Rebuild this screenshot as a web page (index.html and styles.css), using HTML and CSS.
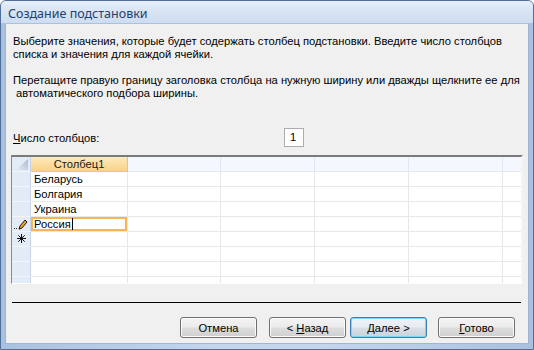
FILE: index.html
```html
<!DOCTYPE html>
<html lang="ru">
<head>
<meta charset="utf-8">
<title>Создание подстановки</title>
<link rel="stylesheet" href="styles.css">
</head>
<body>
<div class="window">
  <div class="titlebar"><span class="title">Создание подстановки</span></div>
  <div class="client">
    <p class="para">Выберите значения, которые будет содержать столбец подстановки. Введите число столбцов<br>списка и значения для каждой ячейки.</p>
    <p class="para p2">Перетащите правую границу заголовка столбца на нужную ширину или дважды щелкните ее для<br>&nbsp;автоматического подбора ширины.</p>
    <div class="cols-row">
      <span class="label"><u>Ч</u>исло столбцов:</span>
      <span class="numbox">1</span>
    </div>
    <div class="grid">
      <div class="row head">
        <div class="cell rh corner"><svg width="18" height="14" viewBox="0 0 18 14"><defs><linearGradient id="tg" x1="0" y1="1" x2="1" y2="0"><stop offset="0" stop-color="#e6ecf5"/><stop offset="1" stop-color="#a9b9cf"/></linearGradient></defs><polygon points="16,2 16,13 4,13" fill="url(#tg)"/></svg></div>
        <div class="cell ch active">Столбец1</div>
        <div class="cell ch"></div><div class="cell ch"></div><div class="cell ch"></div><div class="cell ch"></div><div class="cell ch last"></div>
      </div>
      <div class="row">
        <div class="cell rh"></div><div class="cell txt">Беларусь</div>
        <div class="cell"></div><div class="cell"></div><div class="cell"></div><div class="cell"></div><div class="cell last"></div>
      </div>
      <div class="row">
        <div class="cell rh"></div><div class="cell txt">Болгария</div>
        <div class="cell"></div><div class="cell"></div><div class="cell"></div><div class="cell"></div><div class="cell last"></div>
      </div>
      <div class="row">
        <div class="cell rh"></div><div class="cell txt">Украина</div>
        <div class="cell"></div><div class="cell"></div><div class="cell"></div><div class="cell"></div><div class="cell last"></div>
      </div>
      <div class="row">
        <div class="cell rh sel"><svg width="18" height="14" viewBox="0 0 18 14"><rect x="2" y="11" width="1" height="1" fill="#333"/><rect x="4" y="11" width="1" height="1" fill="#333"/><polygon points="7,12 8,9 13,3 15,5 10,11" fill="#f3a32c" stroke="#1a1a1a" stroke-width="1" stroke-linejoin="round"/><line x1="7" y1="12" x2="8.5" y2="11.5" stroke="#1a1a1a"/></svg></div>
        <div class="cell txt editing">Россия<span class="caret"></span></div>
        <div class="cell"></div><div class="cell"></div><div class="cell"></div><div class="cell"></div><div class="cell last"></div>
      </div>
      <div class="row">
        <div class="cell rh"><svg width="18" height="14" viewBox="0 0 18 14"><g stroke="#111" stroke-width="1"><line x1="9.5" y1="2" x2="9.5" y2="11"/><line x1="5" y1="6.5" x2="14" y2="6.5"/><line x1="6.3" y1="3.3" x2="12.7" y2="9.7"/><line x1="12.7" y1="3.3" x2="6.3" y2="9.7"/></g></svg></div>
        <div class="cell"></div>
        <div class="cell"></div><div class="cell"></div><div class="cell"></div><div class="cell"></div><div class="cell last"></div>
      </div>
      <div class="row">
        <div class="cell rh"></div><div class="cell"></div>
        <div class="cell"></div><div class="cell"></div><div class="cell"></div><div class="cell"></div><div class="cell last"></div>
      </div>
      <div class="row">
        <div class="cell rh"></div><div class="cell"></div>
        <div class="cell"></div><div class="cell"></div><div class="cell"></div><div class="cell"></div><div class="cell last"></div>
      </div>
      <div class="row">
        <div class="cell rh"></div><div class="cell"></div>
        <div class="cell"></div><div class="cell"></div><div class="cell"></div><div class="cell"></div><div class="cell last"></div>
      </div>
    </div>
    <div class="sep"></div>
    <div class="buttons">
      <button class="btn">Отмена</button>
      <div class="nav">
        <button class="btn">&lt; <u>Н</u>азад</button>
        <button class="btn default"><u>Д</u>алее &gt;</button>
      </div>
      <button class="btn"><u>Г</u>отово</button>
    </div>
  </div>
</div>
</body>
</html>
```
FILE: styles.css
```css
* { box-sizing: border-box; }
html, body { margin: 0; padding: 0; }
body {
  width: 534px;
  height: 350px;
  overflow: hidden;
  background: #ffffff;
  font-family: "Liberation Sans", Arial, sans-serif;
  font-size: 11.2px;
  color: #000;
}
.window {
  width: 534px;
  height: 350px;
  display: flex;
  flex-direction: column;
  border: 1px solid #4f6f98;
  border-radius: 6px 6px 0 0;
  background: linear-gradient(90deg, #a9c1df 0%, #c4d6ee 40%, #c4d6ee 60%, #a9c1df 100%);
  padding: 0 4px 5px 4px;
}
.titlebar {
  height: 23px;
  flex: none;
  display: flex;
  align-items: center;
  margin: 0 -4px;
  padding-left: 7px;
  border-radius: 5px 5px 0 0;
  background: linear-gradient(180deg, #e6eef9 0%, #d9e5f4 45%, #cddcf0 100%);
  border-bottom: 1px solid #aac2e0;
}
.title {
  font-family: "Noto Sans", "Liberation Sans", sans-serif;
  font-size: 12.5px;
  color: #23416c;
  padding-top: 3px;
}
.client {
  flex: 1;
  background: #f0f0f0;
  border: 1px solid #9eb5d3;
  border-top: none;
  display: flex;
  flex-direction: column;
  padding: 11px 0 0 0;
}
.para {
  margin: 0;
  padding-left: 7px;
  line-height: 13px;
  white-space: nowrap;
}
.p2 { margin-top: 13px; }
.cols-row {
  margin-top: 28px;
  height: 19px;
  display: flex;
  align-items: center;
  padding-left: 7px;
}
.label { width: 271px; }
.numbox {
  width: 20px;
  height: 19px;
  background: #fff;
  border: 1px solid #abadb3;
  padding-left: 5px;
  line-height: 17px;
}
.grid {
  margin: 8px 0 0 5px;
  width: 512px;
  height: 129px;
  overflow: hidden;
  background: #fff;
  border-top: 2px solid #7a7a7a;
  border-left: 1px solid #8a8a8a;
  border-right: 2px solid #f4f4f4;
  border-bottom: 1px solid #ffffff;
}
.row {
  display: grid;
  grid-template-columns: 19px 97px 93px 94px 94px 94px 18px;
  height: 15px;
}
.cell {
  border-right: 1px solid #e8e8e8;
  border-bottom: 1px solid #e8e8e8;
  height: 15px;
  line-height: 15px;
  padding-left: 3px;
  white-space: nowrap;
  overflow: hidden;
  position: relative;
}
.cell.last { border-right: none; }
.rh {
  background: #e3ebf6;
  border-right: 1px solid #c9d5e6;
  border-bottom: 1px solid #f2f6fb;
  padding: 0;
}
.rh svg { display: block; }
.ch {
  background: #f5f7ff;
  border-right: 1px solid #e2e6f2;
  border-bottom: 1px solid #e6e8f0;
  text-align: center;
  padding: 0;
}
.ch.active {
  background: linear-gradient(180deg, #fde9c0 0%, #fbdc9e 55%, #f8d28a 100%);
  border-right: 1px solid #e8c27a;
  border-bottom: 1px solid #f0c67a;
  color: #1a1a1a;
}
.corner { background: #e3ebf6; }
.editing {
  box-shadow: inset 0 0 0 2px #f7b552;
  padding-left: 3px;
}
.caret {
  display: inline-block;
  width: 1px;
  height: 12px;
  background: #000;
  vertical-align: -2px;
  margin-left: 1px;
}
.sep {
  margin: 18px 0 0 6px;
  width: 509px;
  height: 1px;
  background: #000;
}
.buttons {
  margin-top: 14px;
  display: flex;
  justify-content: flex-end;
  padding-right: 13px;
  gap: 12px;
}
.nav { display: flex; gap: 4px; margin-right: -1px; }
.btn {
  width: 77px;
  height: 21px;
  font-family: "Liberation Sans", Arial, sans-serif;
  font-size: 11.2px;
  font-weight: normal;
  color: #000;
  border: 1px solid #707070;
  border-radius: 3px;
  background: linear-gradient(180deg, #f3f3f3 0%, #ebebeb 48%, #dddddd 52%, #cfcfcf 100%);
  box-shadow: inset 0 0 0 1px #fbfbfb;
  padding: 0;
}
.btn.default {
  border-color: #3c7fb1;
  box-shadow: inset 0 0 0 1px #7ad6f5;
  background: linear-gradient(180deg, #eef3f7 0%, #e6ecf1 48%, #d8dfe6 52%, #cbd3db 100%);
}
u { text-decoration: underline; text-underline-offset: 1px; }
```
